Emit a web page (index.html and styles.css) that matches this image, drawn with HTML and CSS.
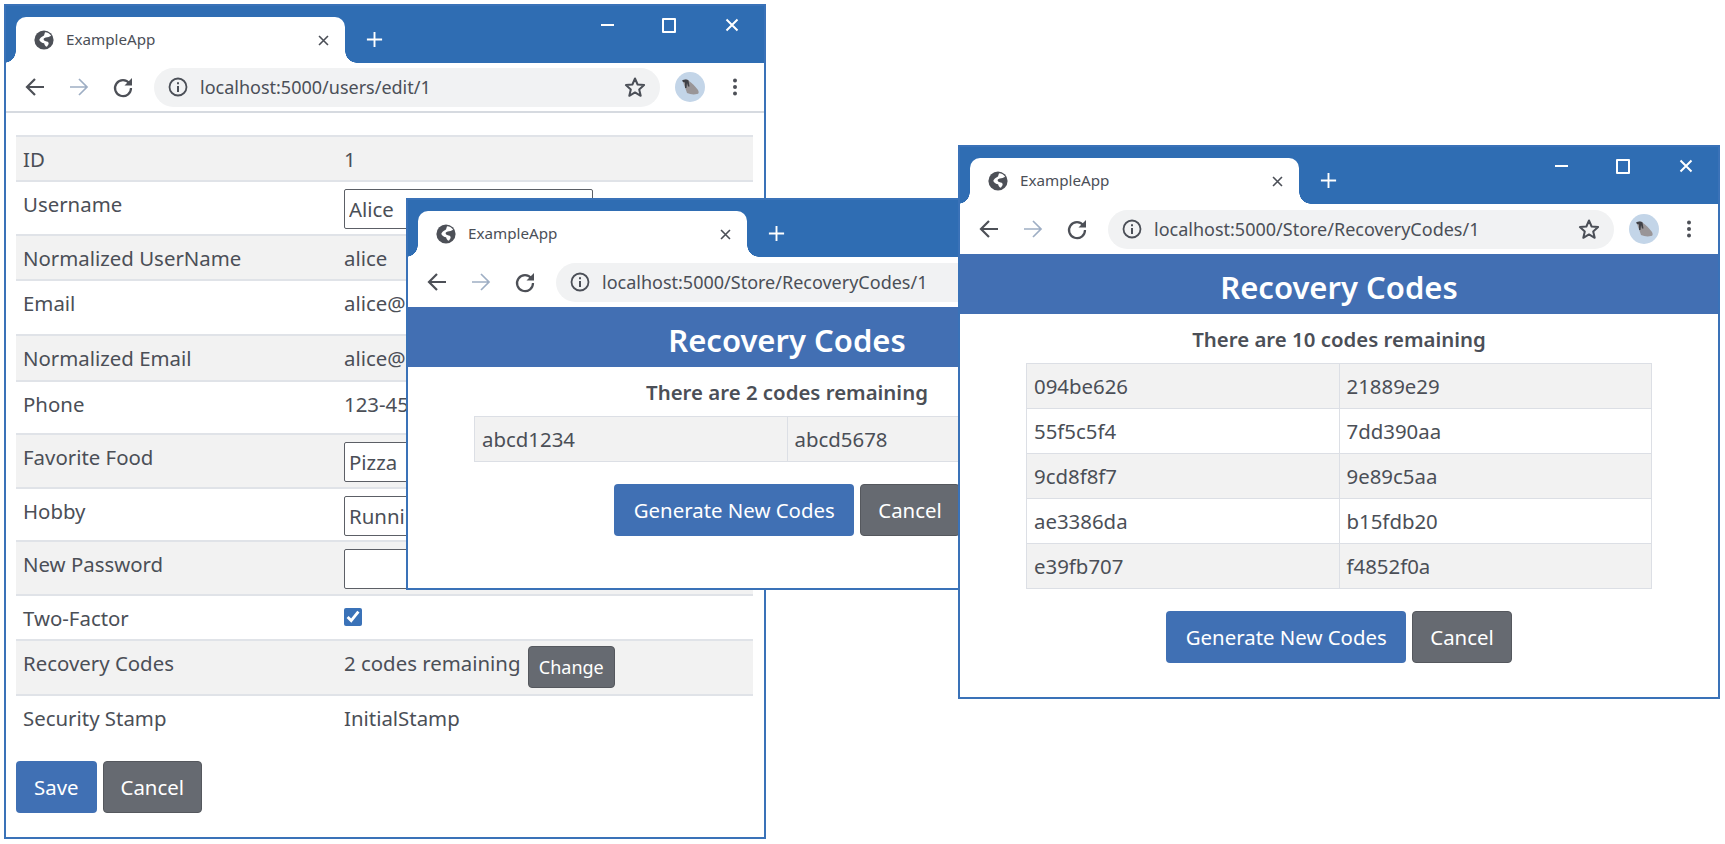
FILE: index.html
```html
<!DOCTYPE html>
<html lang="en">
  <head>
    <meta charset="UTF-8" />
    <meta name="viewport" content="width=device-width, initial-scale=1.0" />
    <title>ExampleApp</title>
    <link rel="stylesheet" href="styles.css">
  </head>
  <body>
    <svg class="sprite" width="0" height="0">
      <symbol id="globe" viewBox="0 0 20 20">
        <circle cx="10" cy="10" r="9.6" fill="#4d5057" />
        <path d="M11 2.2c2.8.2 5 1.5 6.2 3.5l-2.6 1.2c-2 .2-4 .4-4.800 1.700-.8 1.500.8 2.600 2.800 2.900 1.800.3 2.400 1.300 1.900 2.700l-1.600 2.500c-1.800-.6-2.500-2-2.800-3.500-1.800-.3-4-1.300-4.800-3.300C6.200 7 9 6.500 10 5.500z" fill="#fff" />
      </symbol>
      <symbol id="back" viewBox="0 0 24 24">
        <path d="M21 12H5M12 4 4 12l8 8" fill="none" stroke="currentColor" stroke-width="2.200" />
      </symbol>
      <symbol id="forward" viewBox="0 0 24 24">
        <path d="M3 12h17M12 4l8 8-8 8" fill="none" stroke="currentColor" stroke-width="1.700" />
      </symbol>
      <symbol id="reload" viewBox="0 0 24 24">
        <path d="M18.500 8.500A8 8 0 1 0 20 13" fill="none" stroke="currentColor" stroke-width="2.200" />
        <path d="M21 3v7.500h-7.500z" fill="currentColor" />
      </symbol>
      <symbol id="info" viewBox="0 0 20 20">
        <circle cx="10" cy="10" r="8.500" fill="none" stroke="currentColor" stroke-width="1.800" />
        <path d="M9 9h2v6H9zM9 5.200h2v2H9z" fill="currentColor" />
      </symbol>
      <symbol id="star" viewBox="0 0 24 24">
        <path d="m12 3.500 2.600 6 6.500.6-4.900 4.300 1.500 6.400L12 17.400l-5.700 3.400 1.500-6.400-4.900-4.300 6.500-.6z" fill="none" stroke="currentColor" stroke-width="2" stroke-linejoin="round" />
      </symbol>
      <symbol id="walrus" viewBox="0 0 30 30">
        <circle cx="15" cy="15" r="15" fill="#c3d5e8" />
        <path d="M8 9c2-2 5-2 6 0 3 2 6 5 9 9 1 2 1 4-1 4-4 1-7 0-10-1-1-3-2-6-3-8z" fill="#999597" />
        <path d="M7 8.500c2-1.500 5-1.500 6.500 0l1 6-1.500 0-1-3.500-.5 5-1.500 0 0-5.500-2-.5z" fill="#3f4046" />
      </symbol>
      <symbol id="kebab" viewBox="0 0 24 24">
        <circle cx="12" cy="5.500" r="2" fill="currentColor" />
        <circle cx="12" cy="12" r="2" fill="currentColor" />
        <circle cx="12" cy="18.500" r="2" fill="currentColor" />
      </symbol>
      <symbol id="close" viewBox="0 0 16 16">
        <path d="M2.500 2.500l11 11M13.500 2.500l-11 11" fill="none" stroke="currentColor" stroke-width="2" />
      </symbol>
      <symbol id="plus" viewBox="0 0 20 20">
        <path d="M10 2v16M2 10h16" fill="none" stroke="currentColor" stroke-width="2" />
      </symbol>
    </svg>

    <!-- edit user window -->
    <div class="window win-edit">
      <div class="tabstrip">
        <div class="tab">
          <svg class="tab-globe"><use href="#globe" /></svg>
          <span class="tab-title">ExampleApp</span>
          <svg class="tab-close"><use href="#close" /></svg>
        </div>
        <svg class="new-tab"><use href="#plus" /></svg>
        <div class="controls">
          <span class="ctl-min"></span>
          <span class="ctl-max"></span>
          <svg class="ctl-close"><use href="#close" /></svg>
        </div>
      </div>
      <div class="toolbar">
        <svg class="nav-icon"><use href="#back" /></svg>
        <svg class="nav-icon nav-off"><use href="#forward" /></svg>
        <svg class="nav-icon"><use href="#reload" /></svg>
        <div class="omnibox">
          <svg class="info"><use href="#info" /></svg>
          <span class="url">localhost:5000/users/edit/1</span>
          <svg class="star"><use href="#star" /></svg>
        </div>
        <svg class="avatar"><use href="#walrus" /></svg>
        <svg class="nav-icon kebab"><use href="#kebab" /></svg>
      </div>
      <div class="edit-body">
        <table class="user-table">
          <tr class="r45"><td class="label">ID</td><td>1</td></tr>
          <tr class="r54"><td class="label">Username</td><td><input class="field" value="Alice"></td></tr>
          <tr class="r45"><td class="label">Normalized UserName</td><td>alice</td></tr>
          <tr class="r55"><td class="label">Email</td><td>alice@example.com</td></tr>
          <tr class="r46"><td class="label">Normalized Email</td><td>alice@example.com</td></tr>
          <tr class="r53"><td class="label">Phone</td><td>123-4567</td></tr>
          <tr class="r54"><td class="label">Favorite Food</td><td><input class="field" value="Pizza"></td></tr>
          <tr class="r53"><td class="label">Hobby</td><td><input class="field" value="Running"></td></tr>
          <tr class="r54"><td class="label">New Password</td><td><input class="field"></td></tr>
          <tr class="r45"><td class="label">Two-Factor</td><td><input class="check" type="checkbox" checked></td></tr>
          <tr class="r55"><td class="label">Recovery Codes</td><td>2 codes remaining <button class="btn btn-gray btn-small">Change</button></td></tr>
          <tr class="r45 last"><td class="label">Security Stamp</td><td>InitialStamp</td></tr>
        </table>
        <div class="edit-buttons">
          <button class="btn btn-blue">Save</button>
          <button class="btn btn-gray">Cancel</button>
        </div>
      </div>
    </div>

    <!-- two codes left -->
    <div class="window win-two">
      <div class="tabstrip">
        <div class="tab">
          <svg class="tab-globe"><use href="#globe" /></svg>
          <span class="tab-title">ExampleApp</span>
          <svg class="tab-close"><use href="#close" /></svg>
        </div>
        <svg class="new-tab"><use href="#plus" /></svg>
      </div>
      <div class="toolbar">
        <svg class="nav-icon"><use href="#back" /></svg>
        <svg class="nav-icon nav-off"><use href="#forward" /></svg>
        <svg class="nav-icon"><use href="#reload" /></svg>
        <div class="omnibox">
          <svg class="info"><use href="#info" /></svg>
          <span class="url">localhost:5000/Store/RecoveryCodes/1</span>
        </div>
      </div>
      <h3 class="banner">Recovery Codes</h3>
      <p class="remaining">There are 2 codes remaining</p>
      <table class="codes">
        <tr><td>abcd1234</td><td>abcd5678</td></tr>
      </table>
      <div class="code-buttons">
        <button class="btn btn-blue btn-wide">Generate New Codes</button>
        <button class="btn btn-gray">Cancel</button>
      </div>
    </div>

    <!-- ten codes left -->
    <div class="window win-ten">
      <div class="tabstrip">
        <div class="tab">
          <svg class="tab-globe"><use href="#globe" /></svg>
          <span class="tab-title">ExampleApp</span>
          <svg class="tab-close"><use href="#close" /></svg>
        </div>
        <svg class="new-tab"><use href="#plus" /></svg>
        <div class="controls">
          <span class="ctl-min"></span>
          <span class="ctl-max"></span>
          <svg class="ctl-close"><use href="#close" /></svg>
        </div>
      </div>
      <div class="toolbar">
        <svg class="nav-icon"><use href="#back" /></svg>
        <svg class="nav-icon nav-off"><use href="#forward" /></svg>
        <svg class="nav-icon"><use href="#reload" /></svg>
        <div class="omnibox">
          <svg class="info"><use href="#info" /></svg>
          <span class="url">localhost:5000/Store/RecoveryCodes/1</span>
          <svg class="star"><use href="#star" /></svg>
        </div>
        <svg class="avatar"><use href="#walrus" /></svg>
        <svg class="nav-icon kebab"><use href="#kebab" /></svg>
      </div>
      <h3 class="banner">Recovery Codes</h3>
      <p class="remaining">There are 10 codes remaining</p>
      <table class="codes">
        <tr><td>094be626</td><td>21889e29</td></tr>
        <tr><td>55f5c5f4</td><td>7dd390aa</td></tr>
        <tr><td>9cd8f8f7</td><td>9e89c5aa</td></tr>
        <tr><td>ae3386da</td><td>b15fdb20</td></tr>
        <tr><td>e39fb707</td><td>f4852f0a</td></tr>
      </table>
      <div class="code-buttons">
        <button class="btn btn-blue btn-wide">Generate New Codes</button>
        <button class="btn btn-gray">Cancel</button>
      </div>
    </div>
  </body>
</html>
```

FILE: styles.css
```css
body {
  margin: 0;
  height: 844px;
  overflow: hidden;
  background: #fff;
  color: #4b4f57;
  font-family: "Noto Sans", "Open Sans", sans-serif;
  font-size: 20.400px;
}
.sprite {
  display: block;
}

/* windows sit on a free canvas */
.window {
  position: absolute;
  box-sizing: border-box;
  width: 762px;
  border: 2px solid #3a72b8;
  background: #fff;
  overflow: hidden;
}
.win-edit {
  left: 4px;
  top: 4px;
  height: 835px;
}
.win-two {
  left: 406px;
  top: 198px;
  height: 392px;
}
.win-ten {
  left: 958px;
  top: 145px;
  height: 554px;
}

.tabstrip {
  display: flex;
  box-sizing: border-box;
  height: 57px;
  padding: 11px 24px 0 10px;
  background: #2f6db3;
  color: #fff;
}
.tab {
  position: relative;
  display: flex;
  align-items: center;
  box-sizing: border-box;
  width: 329px;
  padding: 0 14px 0 18px;
  background: #fff;
  border-radius: 10px 10px 0 0;
  color: #4b4f57;
}
.tab::before,
.tab::after {
  content: "";
  position: absolute;
  bottom: 0;
  width: 12px;
  height: 12px;
}
.tab::before {
  left: -12px;
  background: radial-gradient(circle at 0 0, #2f6db3 11.5px, #fff 12px);
}
.tab::after {
  right: -12px;
  background: radial-gradient(circle at 100% 0, #2f6db3 11.5px, #fff 12px);
}
.tab-globe {
  width: 20px;
  height: 20px;
  margin-right: 12px;
}
.tab-title {
  flex: 1;
  margin-top: -2px;
  font-size: 15.200px;
}
.tab-close {
  width: 13px;
  height: 13px;
  margin-right: 1px;
}
.new-tab {
  width: 19px;
  height: 19px;
  margin: 13px 0 0 20px;
}
.controls {
  display: flex;
  align-items: center;
  gap: 48px;
  height: 16px;
  margin-left: auto;
}
.ctl-min {
  width: 13px;
  height: 2px;
  background: #fff;
}
.ctl-max {
  box-sizing: border-box;
  width: 14px;
  height: 15px;
  border: 2px solid #fff;
  border-radius: 1px;
}
.ctl-close {
  width: 16px;
  height: 16px;
}

.toolbar {
  display: flex;
  align-items: center;
  gap: 20px;
  box-sizing: border-box;
  height: 50px;
  padding: 0 17px;
  border-bottom: 2px solid #d6dae0;
}
.win-two .toolbar,
.win-ten .toolbar {
  border-bottom: 0;
}
.nav-icon {
  flex: none;
  width: 24px;
  height: 24px;
  color: #4d5057;
}
.nav-off {
  color: #9eaec4;
}
.omnibox {
  display: flex;
  align-items: center;
  flex: none;
  box-sizing: border-box;
  width: 506px;
  height: 39px;
  margin-left: -1px;
  padding: 0 13px 0 14px;
  border-radius: 20px;
  background: #f1f2f3;
}
.info {
  width: 20px;
  height: 20px;
  margin-right: 12px;
}
.url {
  flex: 1;
  font-size: 18px;
  white-space: nowrap;
}
.star {
  width: 24px;
  height: 24px;
}
.avatar {
  flex: none;
  width: 30px;
  height: 30px;
  margin-left: -5px;
}
.kebab {
  margin-left: -2px;
}

/* edit page */
.edit-body {
  padding: 22px 10px 0;
}
.user-table {
  width: 737px;
  table-layout: fixed;
  border-collapse: collapse;
}
.user-table td {
  box-sizing: border-box;
  padding: 10px 0 0;
  vertical-align: top;
  line-height: 24px;
  border-top: 2px solid #e0e3e8;
}
.user-table tr:nth-child(odd) {
  background: #f2f2f2;
}
.user-table tr.last {
  background: none;
}
.user-table .label {
  width: 328px;
  padding-left: 7px;
}
.r45 {
  height: 45px;
}
.r46 {
  height: 46px;
}
.r53 {
  height: 53px;
}
.r54 {
  height: 54px;
}
.r55 {
  height: 55px;
}
.user-table td:has(.field) {
  padding-top: 7px;
}
.field {
  display: block;
  box-sizing: border-box;
  width: 249px;
  height: 40px;
  padding: 0 4px;
  border: 1px solid #5c5f66;
  border-radius: 2px;
  background: #fff;
  color: #4b4f57;
  font: inherit;
}
.check {
  display: block;
  width: 18px;
  height: 18px;
  margin: 2px 0 0;
  accent-color: #3a72b8;
}

.btn {
  box-sizing: border-box;
  height: 52px;
  padding: 0 17px;
  border: 1px solid transparent;
  border-radius: 4px;
  color: #fff;
  font: inherit;
}
.btn-blue {
  background: #4070b4;
}
.btn-gray {
  background: #666a71;
  border-color: #55585e;
}
.btn-small {
  height: 42px;
  padding: 0 10px;
  font-size: 18px;
  vertical-align: top;
  margin: -5px 0 0 2px;
}
.btn-wide {
  width: 240px;
  padding: 0;
}
.edit-buttons {
  display: flex;
  gap: 6px;
  margin-top: 21px;
}

/* recovery code pages */
.banner {
  box-sizing: border-box;
  height: 60px;
  margin: 0;
  padding-top: 3px;
  background: #426fb3;
  color: #fff;
  font-size: 31px;
  font-weight: 600;
  line-height: 60px;
  text-align: center;
}
.remaining {
  margin: 12px 0 11px;
  font-weight: 600;
  line-height: 26px;
  text-align: center;
}
.codes {
  width: 626px;
  margin: 0 auto;
  table-layout: fixed;
  border-collapse: collapse;
}
.codes td {
  box-sizing: border-box;
  height: 45px;
  padding: 0 7px;
  border: 1px solid #dcdfe5;
}
.codes tr:nth-child(odd) {
  background: #f2f2f2;
}
.code-buttons {
  display: flex;
  justify-content: center;
  gap: 6px;
  margin-top: 22px;
}
```
